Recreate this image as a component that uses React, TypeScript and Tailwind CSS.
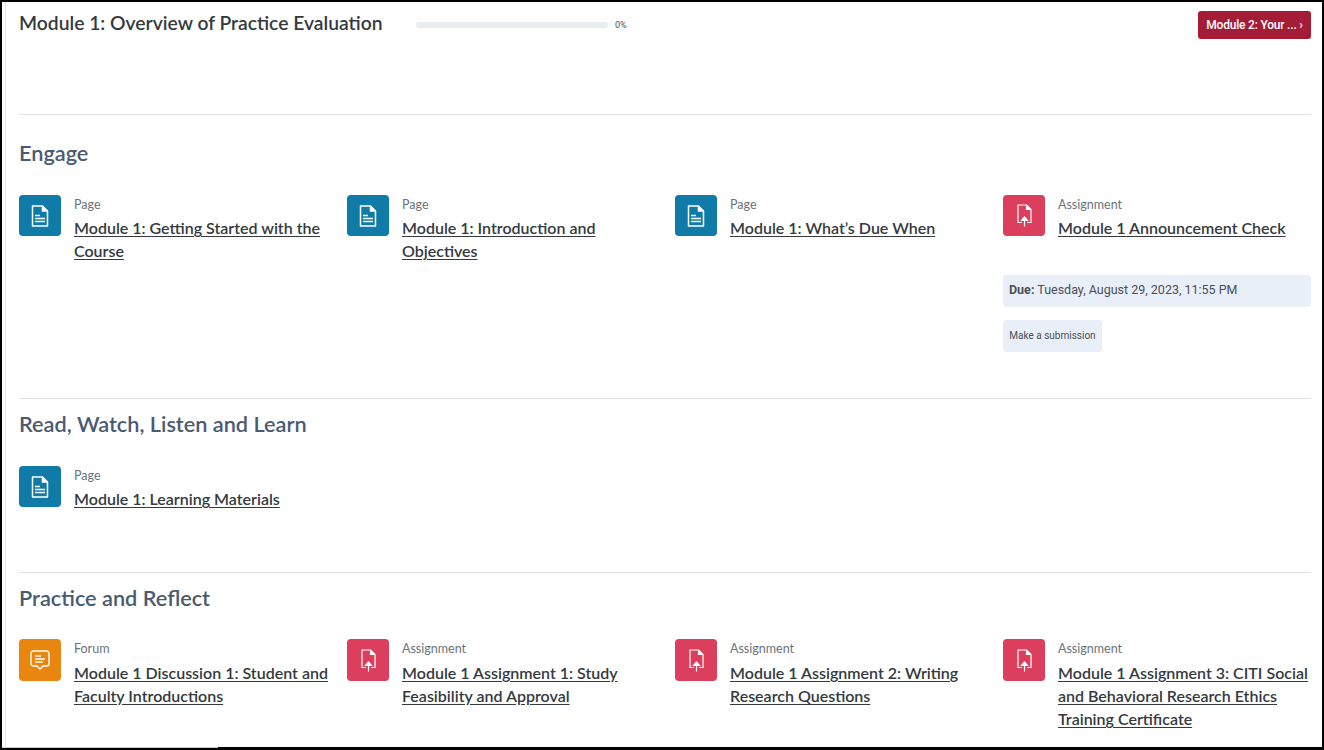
import { ReactNode } from "react"

const font = "font-['Lato','Noto_Sans',sans-serif]"

function PageIcon() {
  return (
    <svg width="18" height="22" viewBox="0 0 18 22" fill="none" stroke="#fff" strokeWidth="1.5">
      <path d="M1.500 1h10l5 5v15h-15z" strokeLinejoin="round" />
      <path d="M11.500 1v5h5" fill="#fff" />
      <path d="M4 10.500h5M4 13.500h10M4 16.500h10" />
    </svg>
  )
}

function UploadIcon() {
  return (
    <svg width="15" height="23" viewBox="0 0 15 23" fill="none" stroke="#fff" strokeWidth="1.2">
      <path d="M5 18.500H1V1h8.500L14 5.500v13h-4" strokeLinejoin="round" />
      <path d="M9.500 1v4.500H14" fill="#fff" />
      <path d="M7.500 22.500V13" />
      <path d="M4.500 16.500L7.500 13l3 3.500z" fill="#fff" />
    </svg>
  )
}

function ForumIcon() {
  return (
    <svg width="20" height="20" viewBox="0 0 20 20" fill="none" stroke="#fff" strokeWidth="1.4">
      <path d="M3.500 1h13A2.500 2.500 0 0 1 19 3.500v10a2.500 2.500 0 0 1-2.500 2.500H13l-3 3-3-3H3.500A2.500 2.500 0 0 1 1 13.500v-10A2.500 2.500 0 0 1 3.500 1z" strokeLinejoin="round" />
      <path d="M5 6h6M5 9h10M5 12h8" />
    </svg>
  )
}

const kinds = {
  Page: { bg: "bg-[#117ba8]", icon: <PageIcon /> },
  Assignment: { bg: "bg-[#dc3f5d]", icon: <UploadIcon /> },
  Forum: { bg: "bg-[#e8860f]", icon: <ForumIcon /> },
}

function Activity({ kind, title, tall, children }: { kind: keyof typeof kinds; title: string; tall?: boolean; children?: ReactNode }) {
  const k = kinds[kind]
  return (
    <div className="min-w-0">
      <div className="flex gap-[13px]">
        <div className={`w-[42px] shrink-0 rounded-[4px] flex items-center justify-center ${tall ? "h-[42px]" : "h-[41px]"} ${k.bg}`}>{k.icon}</div>
        <div className="min-w-0 -mr-[3px] pt-[1px]">
          <div className="text-[12.500px] leading-[18px] text-[#6a737b]">{kind}</div>
          <a className={`block text-[16px] leading-[23px] font-semibold text-[#343a40] underline underline-offset-2 ${tall ? "mt-[3px]" : "mt-[2px]"}`}>{title}</a>
        </div>
      </div>
      {children}
    </div>
  )
}

function Section({ title, className, gridClass, children }: { title: string; className: string; gridClass: string; children: ReactNode }) {
  return (
    <section className={`border-t border-[#dee2e6] ${className}`}>
      <h3 className="text-[21.700px] leading-[28px] font-semibold text-[#495a72]">{title}</h3>
      <div className={`grid grid-cols-4 gap-x-[20px] ${gridClass}`}>{children}</div>
    </section>
  )
}

export default function App() {
  return (
    <div className={`h-[750px] flex flex-col overflow-hidden bg-white border-2 border-black ${font}`}>
      <div className="flex-1 min-h-0 overflow-hidden ml-[3px] border-l border-[#e3e6ec] pl-[13px] pr-[11px]">
        <div className="h-[112px] flex items-start pt-[8px]">
          <h2 className="text-[19.300px] leading-[26px] font-semibold text-[#343a40] w-[397px]">Module 1: Overview of Practice Evaluation</h2>
          <div className="flex items-center gap-[7px] pt-[9px]">
            <div className="w-[192px] h-[6px] rounded-full bg-[#e9ecef]" />
            <span className="text-[9px] leading-[12px] text-[#495057] font-['Roboto',sans-serif]">0%</span>
          </div>
          <a className="ml-auto mt-[1px] h-[28px] w-[113px] rounded-[3px] bg-[#a51c36] text-white text-[12px] font-medium tracking-[-0.2px] font-['Roboto',sans-serif] flex items-center justify-center">Module 2: Your ... ›</a>
        </div>

        <Section title="Engage" className="h-[284px] pt-[24px]" gridClass="mt-[28px]">
          <Activity kind="Page" title="Module 1: Getting Started with the Course" />
          <Activity kind="Page" title="Module 1: Introduction and Objectives" />
          <Activity kind="Page" title="Module 1: What’s Due When" />
          <Activity kind="Assignment" title="Module 1 Announcement Check">
            <div className="mt-[36px] h-[32px] rounded-[3px] bg-[#e9eff8] px-[6px] pb-[1px] flex items-center text-[12.500px] text-[#495057] font-['Roboto',sans-serif]">
              <span><b className="font-bold">Due:</b> Tuesday, August 29, 2023, 11:55 PM</span>
            </div>
            <div className="mt-[13px] h-[32px] w-[99px] rounded-[3px] bg-[#e9eff8] pb-[1px] flex items-center justify-center text-[10px] text-[#495057] font-['Roboto',sans-serif]">Make a submission</div>
          </Activity>
        </Section>

        <Section title="Read, Watch, Listen and Learn" className="h-[174px] pt-[11px]" gridClass="mt-[28px]">
          <Activity kind="Page" title="Module 1: Learning Materials" />
        </Section>

        <Section title="Practice and Reflect" className="pt-[11px]" gridClass="mt-[27px]">
          <Activity tall kind="Forum" title="Module 1 Discussion 1: Student and Faculty Introductions" />
          <Activity tall kind="Assignment" title="Module 1 Assignment 1: Study Feasibility and Approval" />
          <Activity tall kind="Assignment" title="Module 1 Assignment 2: Writing Research Questions" />
          <Activity tall kind="Assignment" title="Module 1 Assignment 3: CITI Social and Behavioral Research Ethics Training Certificate" />
        </Section>
      </div>
      <div className="h-[1px] shrink-0 flex">
        <div className="w-[216px] bg-[#c9c9c9]" />
        <div className="flex-1 bg-black" />
      </div>
    </div>
  )
}
